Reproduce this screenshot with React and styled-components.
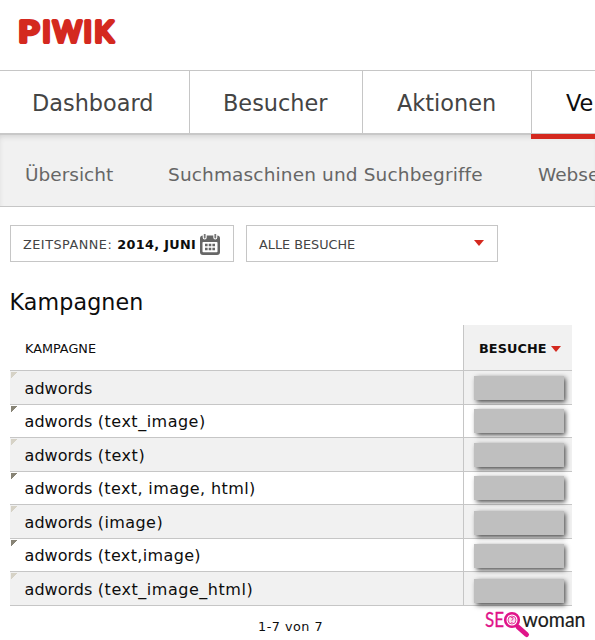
import * as React from "react";
import styled, { createGlobalStyle } from "styled-components";

const GlobalStyle = createGlobalStyle`
  * {
    box-sizing: border-box;
  }

  body {
    margin: 0;
    background: #fff;
    font-family: "DejaVu Sans", sans-serif;
    overflow: hidden;
  }
`;

const Page = styled.div`
  width: 595px;
  height: 640px;
  overflow: hidden;
`;

const Header = styled.header`
  height: 70px;
  padding: 14px 0 0 14px;
`;

const MainNav = styled.nav`
  display: flex;
  height: 65px;
  border-top: 1px solid #c6c6c6;
  border-bottom: 2px solid #c8c8c8;
`;

const Tab = styled.a`
  position: relative;
  flex: none;
  width: ${(p) => p.$width}px;
  padding-left: ${(p) => p.$indent}px;
  border-right: ${(p) => (p.$active ? 0 : 1)}px solid #c6c6c6;
  color: ${(p) => (p.$active ? "#0d0d0d" : "#444")};
  font-size: 22.4px;
  line-height: 64px;
  height: 62px;
  letter-spacing: ${(p) => p.$spacing || 0}px;
  white-space: nowrap;

  &::after {
    content: "";
    display: ${(p) => (p.$active ? "block" : "none")};
    position: absolute;
    top: 63px;
    left: -1px;
    right: 0;
    height: 5px;
    background: #d4291f;
  }
`;

const SubNav = styled.nav`
  display: flex;
  height: 72px;
  padding-left: 25px;
  border-bottom: 1px solid #c6c6c6;
  background: #f1f1f1;
  box-shadow: inset 1px 4px 6px -3px rgba(0, 0, 0, 0.15);
`;

const SubItem = styled.a`
  flex: none;
  width: ${(p) => p.$width}px;
  color: #666;
  font-size: 18.5px;
  line-height: 79px;
  letter-spacing: ${(p) => p.$spacing || 0}px;
  white-space: nowrap;
`;

const Filters = styled.div`
  display: flex;
  gap: 12px;
  padding: 18px 0 0 10px;
`;

const FilterBox = styled.div`
  display: flex;
  align-items: center;
  width: ${(p) => p.$width}px;
  height: 37px;
  padding: 2px 13px 0 12px;
  border: 1px solid #c6c6c6;
  color: #444;
  font-size: 12.8px;
  white-space: nowrap;

  b {
    margin-left: 5px;
    color: #0d0d0d;
    font-size: 12.8px;
    letter-spacing: 0.34px;
  }

  svg {
    flex: none;
    margin: -1px 0 0 auto;
  }
`;

const Label = styled.span`
  letter-spacing: ${(p) => p.$spacing || 0}px;
`;

const Arrow = styled.i`
  width: 0;
  height: 0;
  margin: ${(p) => p.$margin};
  border: solid transparent;
  border-width: 6px 5px 0;
  border-top-color: #d4291f;
`;

const Title = styled.h2`
  margin: 22px 0 0 9.5px;
  height: 41px;
  color: #0d0d0d;
  font-size: 22.2px;
  font-weight: normal;
  line-height: 36px;
  letter-spacing: 0.12px;
`;

const Table = styled.div`
  width: 562px;
  margin-left: 10px;
  color: #0d0d0d;
`;

const Row = styled.div`
  display: grid;
  grid-template-columns: 453px 109px;
  grid-template-rows: 100%;
  height: ${(p) => p.$height}px;
  border-bottom: 1px solid #c6c6c6;
  background: ${(p) => (p.$odd ? "#f1f1f1" : "#fff")};
`;

const HeadCell = styled.div`
  display: flex;
  align-items: center;
  padding: 2px 0 0 15px;
  font-size: 12.8px;
  letter-spacing: 0;
`;

const SortedCell = styled(HeadCell)`
  border-left: 1px solid #c6c6c6;
  background: #f1f1f1;
  font-size: 12.8px;
  font-weight: bold;
  letter-spacing: 0.1px;
`;

const NameCell = styled.div`
  padding-left: 14.6px;
  background: linear-gradient(
      135deg,
      ${(p) => (p.$odd ? "#d6d2c6" : "#888476")} 0 4.5px,
      transparent 4.5px
    )
    1px 1px / 7px 7px no-repeat;
  font-size: 16px;
  line-height: ${(p) => (p.$odd ? 35 : 34)}px;
  white-space: nowrap;
`;

const Detail = styled.span`
  letter-spacing: ${(p) => p.$spacing}px;
`;

const ValueCell = styled.div`
  padding: ${(p) => p.$top}px 0 0 10px;
  border-left: 1px solid #c6c6c6;
`;

const Mask = styled.div`
  width: 90px;
  height: 24px;
  background: #bfbfbf;
  box-shadow: 1.5px 2px 5px rgba(0, 0, 0, 0.72);
`;

const Footer = styled.footer`
  display: flex;
  height: 34px;
  padding: 5px 0 0 258px;
`;

const PageCount = styled.span`
  width: 223px;
  color: #0d0d0d;
  font-size: 12.8px;
  line-height: 31px;
  letter-spacing: 0.5px;
`;

const LOGO_LETTERS = [
  ["P", 18.4, 20.5],
  ["I", 42.6],
  ["W", 53, 28.5],
  ["I", 83.8],
  ["K", 94.6],
];

function PiwikLogo() {
  return (
    <svg width="108" height="36" viewBox="14 14 108 36">
      <g
        fontFamily="Lato"
        fontSize="28.6"
        fontWeight="400"
        fill="#d4291f"
        stroke="#d4291f"
        strokeWidth="4.2"
        strokeLinejoin="round"
      >
        {LOGO_LETTERS.map(([letter, x, length]) => (
          <text
            key={x}
            x={x}
            y="42.4"
            textLength={length}
            lengthAdjust="spacingAndGlyphs"
          >
            {letter}
          </text>
        ))}
      </g>
    </svg>
  );
}

function CalendarIcon() {
  return (
    <svg width="20" height="21" viewBox="0 0 20 21">
      <rect x="0" y="1.5" width="20" height="19.5" rx="3" fill="#666" />
      <rect x="2.5" y="8" width="15" height="10.3" rx="0.8" fill="#fff" />
      <path d="M4.7 0v3.5M15.3 0v3.5" stroke="#fff" strokeWidth="4" strokeLinecap="round" />
      <path d="M4.7 0v3.5M15.3 0v3.5" stroke="#777" strokeWidth="1.8" strokeLinecap="round" />
      <path
        d="M5 11h10M5 15h10"
        stroke="#666"
        strokeWidth="2.6"
        strokeDasharray="2.6 1.1"
      />
    </svg>
  );
}

function SeoLogo() {
  return (
    <svg width="110" height="29" viewBox="481 611 110 29">
      <g fontFamily="Lato" fontSize="20.5">
        <text
          x="485"
          y="627.4"
          fill="#e0158a"
          stroke="#e0158a"
          strokeWidth="0.3"
          textLength="19"
          lengthAdjust="spacingAndGlyphs"
        >
          SE
        </text>
        <text
          x="522.5"
          y="627.4"
          fontSize="22"
          fill="#1a1a1a"
          stroke="#1a1a1a"
          strokeWidth="0.2"
          textLength="63"
          lengthAdjust="spacingAndGlyphs"
        >
          woman
        </text>
      </g>
      <path d="M518 627l8.5 7.5" stroke="#e0158a" strokeWidth="5" strokeLinecap="round" />
      <circle cx="512" cy="620" r="6.8" fill="#fff" stroke="#e0158a" strokeWidth="2.6" />
      <circle cx="512" cy="620" r="4" fill="#fbe0ef" stroke="#e0158a" strokeWidth="0.8" />
      <text
        x="512"
        y="622.6"
        fontFamily="Lato"
        fontSize="7"
        fontWeight="bold"
        textAnchor="middle"
        fill="#e0158a"
      >
        ?
      </text>
    </svg>
  );
}

const CAMPAIGNS = [
  { detail: "", spacing: 0, top: 5 },
  { detail: " (text_image)", spacing: 0.5, top: 4 },
  { detail: " (text)", spacing: 0.55, top: 5 },
  { detail: " (text, image, html)", spacing: 0.38, top: 4 },
  { detail: " (image)", spacing: 0.43, top: 6 },
  { detail: " (text,image)", spacing: 0.36, top: 5 },
  { detail: " (text_image_html)", spacing: 0.53, top: 7 },
];

export default function App() {
  return (
    <Page>
      <GlobalStyle />
      <Header>
        <PiwikLogo />
      </Header>
      <MainNav>
        <Tab $width={190} $indent={32}>Dashboard</Tab>
        <Tab $width={173} $indent={33}>Besucher</Tab>
        <Tab $width={169} $indent={34}>Aktionen</Tab>
        <Tab $width={63} $indent={34} $active>Ve</Tab>
      </MainNav>
      <SubNav>
        <SubItem $width={143}>Übersicht</SubItem>
        <SubItem $width={370} $spacing={0.14}>Suchmaschinen und Suchbegriffe</SubItem>
        <SubItem $width={57}>Webse</SubItem>
      </SubNav>
      <Filters>
        <FilterBox $width={224}>
          <Label $spacing={0.5}>ZEITSPANNE:</Label>
          <b>2014, JUNI</b>
          <CalendarIcon />
        </FilterBox>
        <FilterBox $width={252}>
          <Label>ALLE BESUCHE</Label>
          <Arrow $margin="-4px 0 0 auto" />
        </FilterBox>
      </Filters>
      <Title>Kampagnen</Title>
      <Table>
        <Row $height={46}>
          <HeadCell>KAMPAGNE</HeadCell>
          <SortedCell>
            BESUCHE
            <Arrow $margin="0 0 0 4px" />
          </SortedCell>
        </Row>
        {CAMPAIGNS.map(({ detail, spacing, top }, i) => (
          <Row key={detail} $odd={i % 2 === 0} $height={i % 2 === 0 ? 34 : 33}>
            <NameCell $odd={i % 2 === 0}>
              adwords
              <Detail $spacing={spacing}>{detail}</Detail>
            </NameCell>
            <ValueCell $top={top}>
              <Mask />
            </ValueCell>
          </Row>
        ))}
      </Table>
      <Footer>
        <PageCount>1-7 von 7</PageCount>
        <SeoLogo />
      </Footer>
    </Page>
  );
}
